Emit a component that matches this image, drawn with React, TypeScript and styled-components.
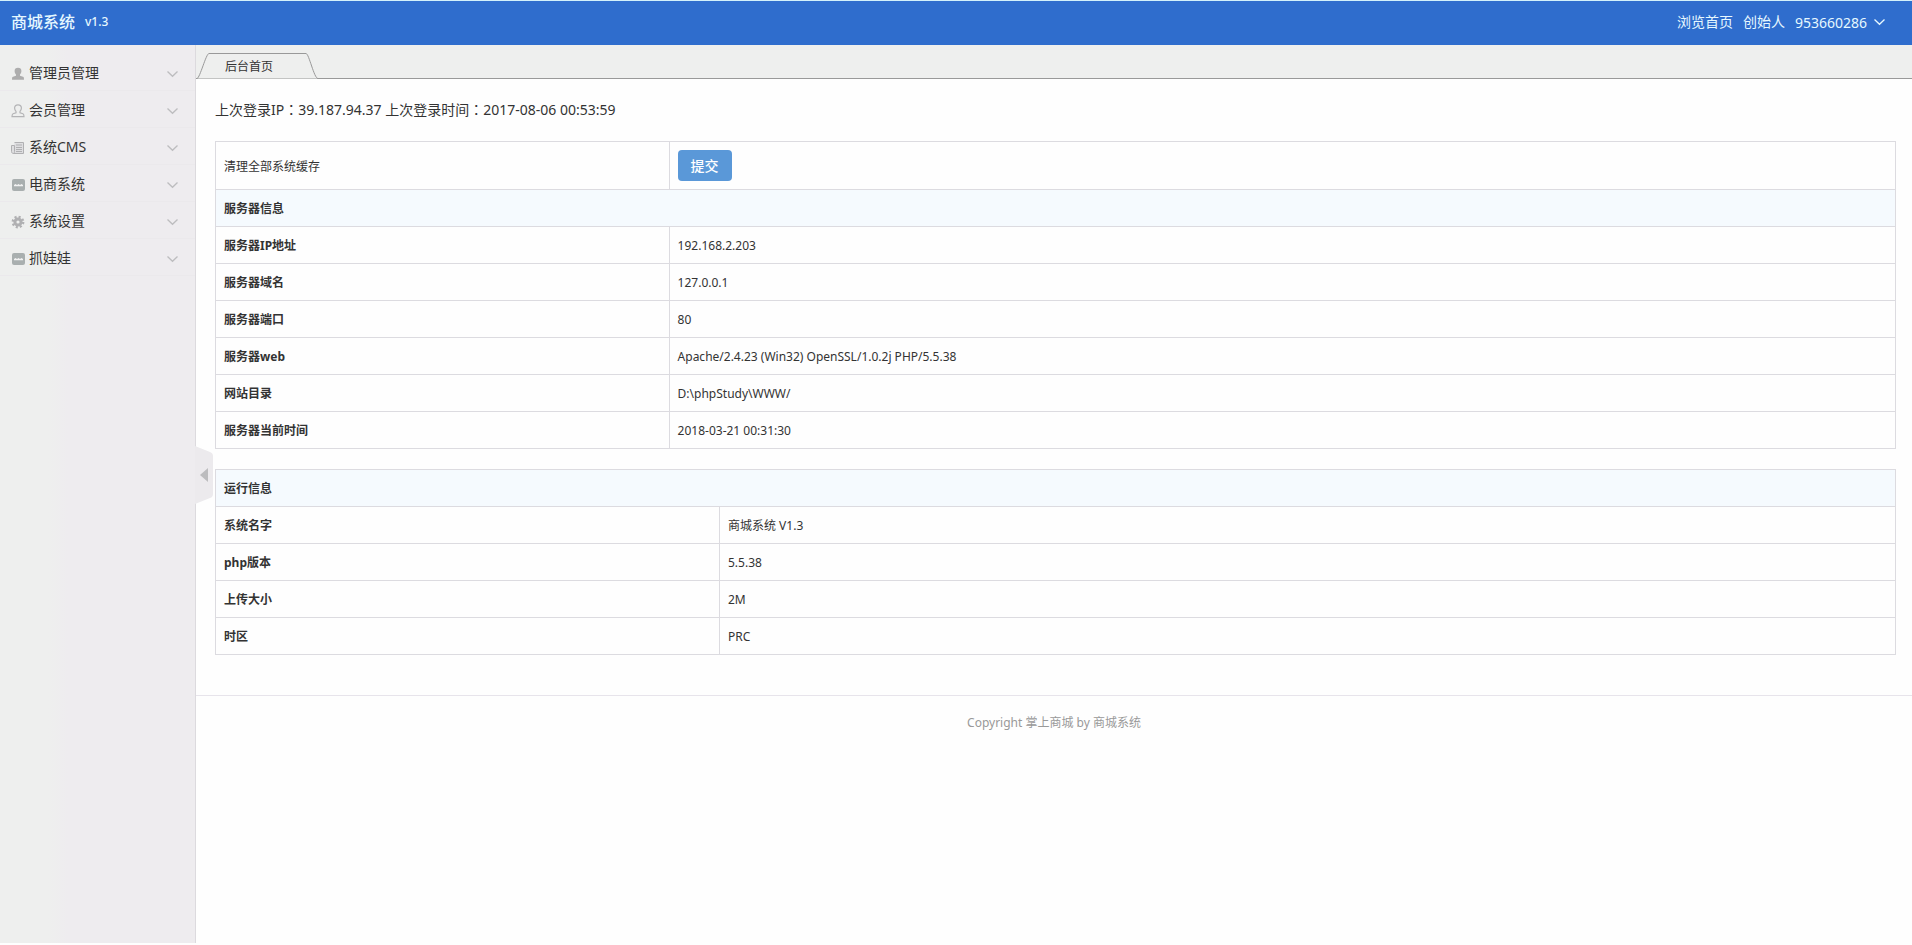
import React from "react";
import styled, { createGlobalStyle } from "styled-components";

const Global = createGlobalStyle`
  *, *::before, *::after { box-sizing: border-box; }
  body {
    margin: 0;
    background: #fefefe;
    color: #333;
    font: 12px/18px "Noto Sans", "Noto Sans CJK SC", sans-serif;
  }
  button { font-family: inherit; cursor: pointer; }
  a { color: inherit; text-decoration: none; }
`;

const Page = styled.div`
  display: flex;
  flex-direction: column;
  min-height: 100vh;
`;

const Header = styled.header`
  display: flex;
  align-items: center;
  justify-content: space-between;
  height: 45px;
  padding: 0 26px 2px 11px;
  border-top: 1px solid #d3f1fb;
  background: #2f6dcd;
  color: #e6f8ff;
`;

const Brand = styled.a`
  display: flex;
  align-items: center;
  gap: 10px;
  font-size: 16px;
  font-weight: 500;
`;

const Version = styled.span`
  font-size: 12px;
`;

const UserNav = styled.nav`
  display: flex;
  align-items: center;
  gap: 10px;
  font-size: 14px;
`;

const UserButton = styled.button`
  display: flex;
  align-items: center;
  gap: 6px;
  padding: 0;
  border: 0;
  background: none;
  color: inherit;
  font-size: 14px;
`;

const Body = styled.div`
  display: flex;
  flex: 1;
`;

const Sidebar = styled.aside`
  position: relative;
  flex: none;
  width: 196px;
  margin-bottom: 2px;
  padding-top: 9px;
  border-right: 1px solid #dcdade;
  background: linear-gradient(90deg, #eeefee 0, #eeefee 48px, #eeecef 68px);
`;

const MenuList = styled.ul`
  margin: 0;
  padding: 0;
  list-style: none;
`;

const MenuButton = styled.button`
  display: flex;
  align-items: center;
  gap: 4px;
  width: 100%;
  height: 37px;
  padding: 0 16px 0 11px;
  border: 0;
  border-bottom: 1px solid #ebe9ec;
  background: none;
  color: #333;
  font-size: 14px;
  text-align: left;

  svg { margin-top: 3px; }
`;

const MenuText = styled.span`
  flex: 1;
`;

const Collapse = styled.button`
  position: absolute;
  top: 401px;
  left: 195px;
  width: 18px;
  height: 58px;
  padding: 0;
  border: 0;
  background: none;
  svg { display: block; }
`;

const Main = styled.main`
  flex: 1;
  min-width: 0;
`;

const TabBar = styled.div`
  display: flex;
  align-items: flex-end;
  height: 34px;
  background: #eeefee;
  border-bottom: 1px solid #999;
`;

const Tab = styled.a`
  position: relative;
  width: 122px;
  height: 26px;
  margin-bottom: -1px;
  padding-left: 29px;
  line-height: 28px;
`;

const TabShape = styled.svg`
  position: absolute;
  top: 0;
  left: 0;
`;

const TabText = styled.span`
  position: relative;
`;

const Content = styled.div`
  padding: 19px 16px 40px 19px;
`;

const LoginInfo = styled.p`
  margin: 0 0 20px;
  font-size: 14px;
  line-height: 23px;
`;

const Colon = styled.span`
  font-family: "Noto Sans CJK TC", sans-serif;
`;

const InfoTable = styled.table<{ $gap?: boolean }>`
  width: 100%;
  margin-top: ${(p) => (p.$gap ? "20px" : "0")};
  border-collapse: collapse;
  table-layout: fixed;
`;

const FirstCol = styled.col<{ $width: string }>`
  width: ${(p) => p.$width};
`;

const cell = `
  height: 37px;
  padding: 10px 8px 8px;
  border: 1px solid #dcdbe0;
  text-align: left;
`;

const HeadCell = styled.th`
  ${cell}
  background: #f5fafe;
`;

const NameCell = styled.th<{ $plain?: boolean }>`
  ${cell}
  font-weight: ${(p) => (p.$plain ? 400 : 700)};
`;

const ValueCell = styled.td<{ $control?: boolean }>`
  ${cell}
  ${(p) => p.$control && "padding: 8px;"}
`;

const Submit = styled.button`
  display: block;
  height: 31px;
  padding: 0 13px 2px;
  border: 0;
  border-radius: 4px;
  background: #5a98d8;
  color: #fff;
  font-size: 14px;
  font-weight: 500;
`;

const Footer = styled.footer`
  padding: 18px 0;
  border-top: 1px solid #e7e4eb;
  color: #999;
  text-align: center;
`;

function Chevron({ color }: { color: string }) {
  return (
    <svg width="13" height="8" viewBox="0 0 13 8" fill="none" stroke={color} strokeWidth="1.3" aria-hidden="true">
      <path d="M1.5 1.5 6.5 6.3 11.5 1.5" />
    </svg>
  );
}

type IconName = "admin" | "member" | "news" | "shop" | "gear";

function MenuIcon({ name }: { name: IconName }) {
  const person =
    "M3.6 4C3.6 1.8 4.8.8 7 .8s3.400 1 3.400 3.200c0 1.500-.6 2.500-1.400 3.400v1.400l3 1c.8.3 1 .9 1 2.900H1c0-2 .2-2.600 1-2.900l3-1V7.400C4.200 6.500 3.600 5.500 3.600 4z";
  return (
    <svg width="14" height="14" viewBox="0 0 14 14" aria-hidden="true">
      {name === "admin" && <path d={person} fill="#adadad" />}
      {name === "member" && <path d={person} fill="none" stroke="#b4b4b6" strokeWidth="1.200" />}
      {name === "news" && (
        <g fill="none" stroke="#b0b0b2">
          <path d="M3.500 1.500h9v11H2.500c-1 0-2-.7-2-2v-6h3v6c0 1-.4 2-1 2" fill="#dedee0" />
          <path d="M5 4h6M5 6.500h6M5 8.500h6M5 10.500h6" />
        </g>
      )}
      {name === "shop" && (
        <g>
          <rect x="1" y="1" width="13" height="12" rx="2" fill="#a9afaf" />
          <path d="M3 8.200V7l1.500-.9L6 7l1.500-.9L9 7l1.500-.9L12 7v1.200z" fill="#f2f2f2" />
        </g>
      )}
      {name === "gear" && (
        <g fill="none" stroke="#b0b0b2">
          <circle cx="7" cy="7" r="5.200" strokeWidth="2.400" strokeDasharray="2.040" />
          <circle cx="7" cy="7" r="3.100" strokeWidth="3" />
        </g>
      )}
    </svg>
  );
}

const menu: { label: string; icon: IconName }[] = [
  { label: "管理员管理", icon: "admin" },
  { label: "会员管理", icon: "member" },
  { label: "系统CMS", icon: "news" },
  { label: "电商系统", icon: "shop" },
  { label: "系统设置", icon: "gear" },
  { label: "抓娃娃", icon: "shop" },
];

const serverRows = [
  ["服务器IP地址", "192.168.2.203"],
  ["服务器域名", "127.0.0.1"],
  ["服务器端口", "80"],
  ["服务器web", "Apache/2.4.23 (Win32) OpenSSL/1.0.2j PHP/5.5.38"],
  ["网站目录", "D:\\phpStudy\\WWW/"],
  ["服务器当前时间", "2018-03-21 00:31:30"],
];

const runtimeRows = [
  ["系统名字", "商城系统 V1.3"],
  ["php版本", "5.5.38"],
  ["上传大小", "2M"],
  ["时区", "PRC"],
];

function Rows({ rows }: { rows: string[][] }) {
  return (
    <>
      {rows.map(([name, value]) => (
        <tr key={name}>
          <NameCell scope="row">{name}</NameCell>
          <ValueCell>{value}</ValueCell>
        </tr>
      ))}
    </>
  );
}

export default function App() {
  return (
    <Page lang="zh-CN">
      <Global />
      <Header>
        <Brand href="#">
          商城系统 <Version>v1.3</Version>
        </Brand>
        <UserNav>
          <a href="#">浏览首页</a>
          <span>创始人</span>
          <UserButton type="button">
            953660286
            <Chevron color="#e6f8ff" />
          </UserButton>
        </UserNav>
      </Header>
      <Body>
        <Sidebar>
          <MenuList>
            {menu.map((item) => (
              <li key={item.label}>
                <MenuButton type="button">
                  <MenuIcon name={item.icon} />
                  <MenuText>{item.label}</MenuText>
                  <Chevron color="#bdbdbf" />
                </MenuButton>
              </li>
            ))}
          </MenuList>
          <Collapse type="button" aria-label="收起菜单">
            <svg width="18" height="58" viewBox="0 0 18 58">
              <path d="M0 0 15 6Q18 7 18 10V48Q18 51 15 52L0 58z" fill="#eceaed" />
              <path d="M5 29 13 22V36z" fill="#bcbcbe" />
            </svg>
          </Collapse>
        </Sidebar>
        <Main>
          <TabBar>
            <Tab href="#">
              <TabShape width="122" height="26" viewBox="0 0 122 26">
                <path d="M1 25.500C4 25 10 .5 13 .5H110C113 .5 118 25.500 122 25.500" fill="#eeefee" stroke="#999" />
              </TabShape>
              <TabText>后台首页</TabText>
            </Tab>
          </TabBar>
          <Content>
            <LoginInfo>
              上次登录IP<Colon lang="zh-TW">：</Colon>39.187.94.37 上次登录时间<Colon lang="zh-TW">：</Colon>2017-08-06 00:53:59
            </LoginInfo>
            <InfoTable>
              <colgroup>
                <FirstCol $width="27%" />
                <col />
              </colgroup>
              <tbody>
                <tr>
                  <NameCell scope="row" $plain>清理全部系统缓存</NameCell>
                  <ValueCell $control>
                    <Submit type="button">提交</Submit>
                  </ValueCell>
                </tr>
                <tr>
                  <HeadCell colSpan={2}>服务器信息</HeadCell>
                </tr>
                <Rows rows={serverRows} />
              </tbody>
            </InfoTable>
            <InfoTable $gap>
              <colgroup>
                <FirstCol $width="30%" />
                <col />
              </colgroup>
              <tbody>
                <tr>
                  <HeadCell colSpan={2}>运行信息</HeadCell>
                </tr>
                <Rows rows={runtimeRows} />
              </tbody>
            </InfoTable>
          </Content>
          <Footer>Copyright 掌上商城 by 商城系统</Footer>
        </Main>
      </Body>
    </Page>
  );
}
